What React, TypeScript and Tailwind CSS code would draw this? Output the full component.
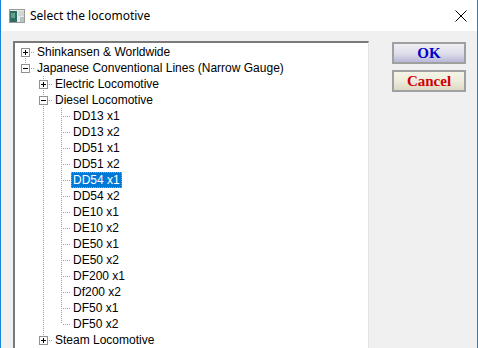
import React from "react";

type Row = {
  label: string;
  guides: boolean[];
  first?: boolean;
  last: boolean;
  kind: "plus" | "minus" | "leaf";
  selected?: boolean;
};

const leaves = [
  "DD13 x1",
  "DD13 x2",
  "DD51 x1",
  "DD51 x2",
  "DD54 x1",
  "DD54 x2",
  "DE10 x1",
  "DE10 x2",
  "DE50 x1",
  "DE50 x2",
  "DF200 x1",
  "Df200 x2",
  "DF50 x1",
  "DF50 x2",
];

const rows: Row[] = [
  { label: "Shinkansen & Worldwide", guides: [], first: true, last: false, kind: "plus" },
  { label: "Japanese Conventional Lines (Narrow Gauge)", guides: [], last: true, kind: "minus" },
  { label: "Electric Locomotive", guides: [false], last: false, kind: "plus" },
  { label: "Diesel Locomotive", guides: [false], last: false, kind: "minus" },
  ...leaves.map((l, i) => ({
    label: l,
    guides: [false, true],
    last: i === leaves.length - 1,
    kind: "leaf" as const,
    selected: l === "DD54 x1",
  })),
  { label: "Steam Locomotive", guides: [false], last: true, kind: "plus" },
];

const DOT = "#a0a0a0";

function Guide({ on }: { on: boolean }) {
  return (
    <svg width="18" height="16" className="shrink-0 block">
      {on && <line x1="9.5" y1="0" x2="9.5" y2="16" stroke={DOT} strokeDasharray="1 1" />}
    </svg>
  );
}

function Connector({ row }: { row: Row }) {
  const box = row.kind !== "leaf";
  return (
    <svg width="18" height="16" className="shrink-0 block">
      {!row.first && <line x1="9.5" y1="0" x2="9.5" y2={box ? 4 : 8} stroke={DOT} strokeDasharray="1 1" />}
      {!row.last && <line x1="9.5" y1={box ? 14 : 8} x2="9.5" y2="16" stroke={DOT} strokeDasharray="1 1" />}
      <line x1={box ? 15 : 11} y1="8.5" x2="18" y2="8.5" stroke={DOT} strokeDasharray="1 1" />
      {box && (
        <>
          <rect x="5.5" y="4.5" width="8" height="8" fill="#fff" stroke="#919191" />
          <line x1="7" y1="8.5" x2="12" y2="8.5" stroke="#000" />
          {row.kind === "plus" && <line x1="9.5" y1="6" x2="9.5" y2="11" stroke="#000" />}
        </>
      )}
    </svg>
  );
}

function TreeRow({ row }: { row: Row }) {
  return (
    <div className="flex h-4 items-center">
      {row.guides.map((g, i) => (
        <Guide key={i} on={g} />
      ))}
      <Connector row={row} />
      <span
        className={
          "ml-[1px] h-4 leading-[15px] px-[1px] whitespace-nowrap border border-dotted " +
          (row.selected ? "bg-[#0078d7] text-white border-[#ff8728]" : "text-black border-transparent")
        }
      >
        {row.label}
      </span>
    </div>
  );
}

function AppIcon() {
  return (
    <svg width="16" height="14" viewBox="0 0 16 14">
      <rect x="0.5" y="0.5" width="15" height="13" fill="#e8e8e8" stroke="#9a9a9a" />
      <rect x="1" y="2" width="7" height="11" fill="#2f6b5e" />
      <rect x="2" y="4" width="4" height="5" fill="#5fa08f" />
      <rect x="9" y="2" width="6" height="5" fill="#cfd6d4" />
      <rect x="11" y="8" width="4" height="5" fill="#b8c4c0" />
    </svg>
  );
}

export default function App() {
  return (
    <div
      className="w-[478px] h-[348px] overflow-hidden border-x border-[#1883d7] bg-[#f0f0f0] flex flex-col"
      style={{ fontFamily: '"Liberation Sans", Arial, sans-serif' }}
    >
      {/* Title bar */}
      <div className="h-[31px] bg-white flex items-center shrink-0">
        <div className="ml-[8px]">
          <AppIcon />
        </div>
        <span className="ml-[5px] text-[12px] text-black" style={{ fontFamily: '"Noto Sans", "Open Sans", sans-serif' }}>
          Select the locomotive
        </span>
        <svg width="12" height="12" viewBox="0 0 12 12" className="ml-auto mr-[10px]">
          <path d="M0.5 0.5 L11.5 11.5 M11.5 0.5 L0.5 11.5" stroke="#000" strokeWidth="1" />
        </svg>
      </div>

      {/* Body */}
      <div className="flex pl-[12px] pt-[10px] gap-[23px]">
        {/* Tree view */}
        <div className="w-[356px] h-[320px] shrink-0 border-t-2 border-l-2 border-t-[#7a7a7a] border-l-[#7a7a7a] border-r border-r-[#e3e3e3] bg-white pl-[1px] pt-[1px] text-[12px]">
          {rows.map((r, i) => (
            <TreeRow key={i} row={r} />
          ))}
        </div>

        {/* Buttons */}
        <div className="flex flex-col gap-[6px] pt-[1px]">
          <button
            className="w-[74px] h-[22px] border-2 border-[#a0a0a0] bg-gradient-to-b from-[#eeeef4] via-[#e0e0ec] to-[#b8b8d8] text-[#0000c8] font-bold text-[15px] leading-none"
            style={{ fontFamily: '"Liberation Serif", "Times New Roman", serif' }}
          >
            OK
          </button>
          <button
            className="w-[74px] h-[22px] border-2 border-[#a0a0a0] bg-gradient-to-b from-[#f6f4e6] via-[#eeecdc] to-[#ddd9c4] text-[#d00000] font-bold text-[15px] leading-none"
            style={{ fontFamily: '"Liberation Serif", "Times New Roman", serif' }}
          >
            Cancel
          </button>
        </div>
      </div>
    </div>
  );
}
